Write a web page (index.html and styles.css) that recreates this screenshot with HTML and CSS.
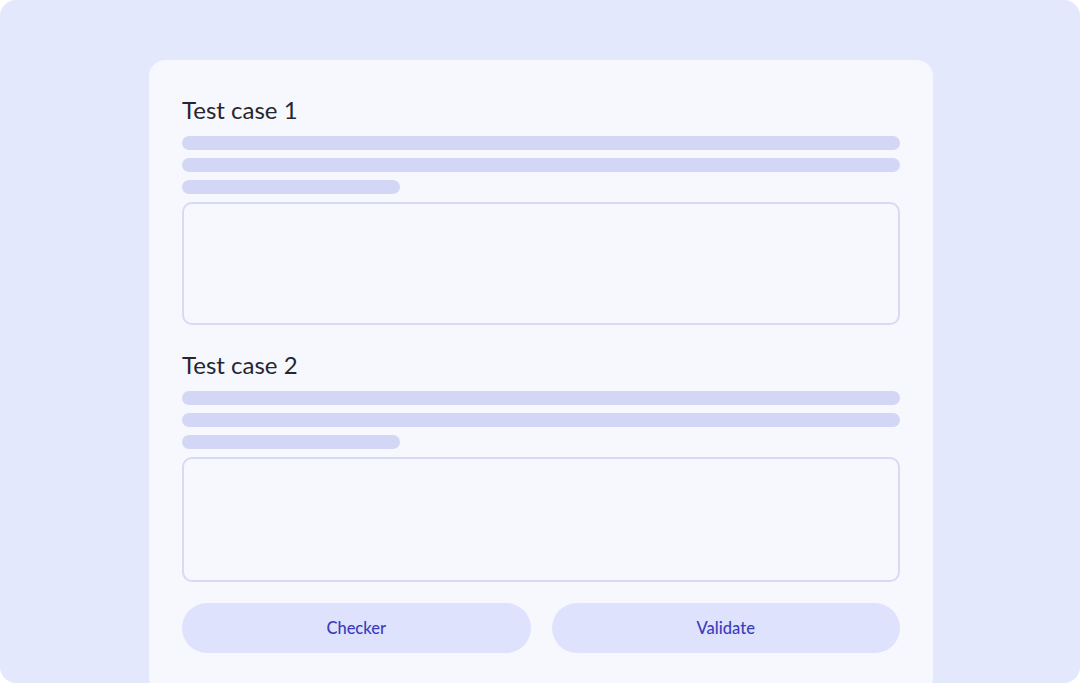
FILE: index.html
```html
<!DOCTYPE html>
<html lang="en">

<head>
    <meta charset="UTF-8">
    <meta name="viewport" content="width=device-width, initial-scale=1.0">
    <title>Test cases</title>
    <link rel="stylesheet" href="styles.css">
</head>

<body>
    <div class="page">
        <div class="card">
            <h2 class="title">Test case 1</h2>
            <div class="lines">
                <span class="line"></span>
                <span class="line"></span>
                <span class="line short"></span>
            </div>
            <div class="box"></div>

            <h2 class="title second">Test case 2</h2>
            <div class="lines">
                <span class="line"></span>
                <span class="line"></span>
                <span class="line short"></span>
            </div>
            <div class="box tall"></div>

            <div class="actions">
                <span class="btn">Checker</span>
                <span class="btn">Validate</span>
            </div>
        </div>
    </div>
</body>

</html>
```

FILE: styles.css
```css
html,
body {
    margin: 0;
    padding: 0;
    background: #ffffff;
}

.page {
    height: 683px;
    padding-left: 2px;
    background: #e4e8fd;
    border-radius: 16px;
    overflow: hidden;
    font-family: Lato, "Open Sans", sans-serif;
}

.card {
    width: 718px;
    margin: 60px auto 0;
    padding: 34px 33px 40px;
    background: #f6f8fe;
    border-radius: 16px;
}

.title {
    margin: 0;
    font-size: 24px;
    line-height: 32px;
    font-weight: 400;
    color: #26262e;
}

.title.second {
    margin-top: 24px;
}

.lines {
    display: flex;
    flex-direction: column;
    gap: 8px;
    margin-top: 10px;
}

.line {
    display: block;
    height: 14px;
    background: #d4d6f6;
    border-radius: 7px;
}

.line.short {
    width: 218px;
}

.box {
    margin-top: 8px;
    height: 119px;
    border: 2px solid #d8d9f3;
    border-radius: 10px;
    box-sizing: content-box;
}

.box.tall {
    height: 121px;
}

.actions {
    display: grid;
    grid-template-columns: 1fr 1fr;
    gap: 21px;
    margin-top: 21px;
}

.btn {
    display: block;
    height: 50px;
    line-height: 50px;
    text-align: center;
    background: #dfe2fc;
    border-radius: 25px;
    color: #3a3cbd;
    font-size: 16.5px;
    font-weight: 500;
}
```
